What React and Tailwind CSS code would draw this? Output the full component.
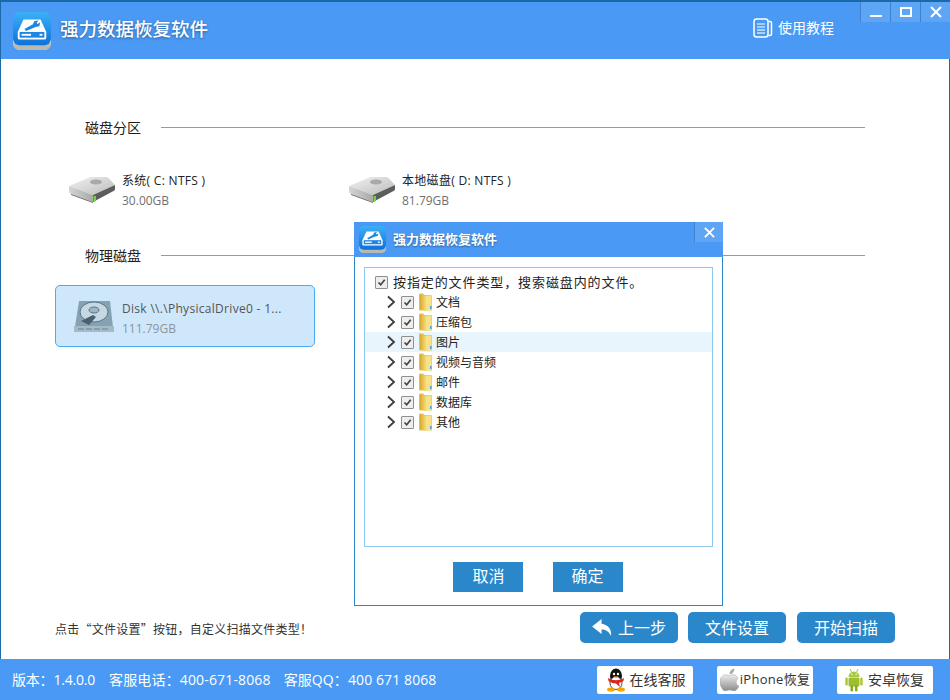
import { useState } from 'react';

const FONT = 'font-["Open_Sans","Noto_Sans_CJK_SC",sans-serif]';

const AppLogo = ({ className }) => (
  <svg viewBox="0 0 40 40" className={className}>
    <defs>
      <linearGradient id="logoBlue" x1="0" y1="0" x2="0" y2="1">
        <stop offset="0" stopColor="#3cb0f7" />
        <stop offset="1" stopColor="#0a73dc" />
      </linearGradient>
    </defs>
    <path d="M0 28h40v5a7 7 0 0 1-7 7H7a7 7 0 0 1-7-7z" fill="#d8d8d2" />
    <path d="M0 32h40v1a7 7 0 0 1-7 7H7a7 7 0 0 1-7-7z" fill="#b9b9b2" />
    <rect x="0" y="0" width="40" height="35" rx="7" fill="url(#logoBlue)" />
    <path d="M11 8h18l6 13v6a2 2 0 0 1-2 2H7a2 2 0 0 1-2-2v-6z" fill="#fff" />
    <rect x="7" y="21" width="26" height="6" fill="#1d86e2" />
    <rect x="9" y="23" width="10" height="2" fill="#fff" />
    <rect x="28" y="23" width="3" height="2" fill="#fff" />
    <path d="M12 18l9-5 1.500-3.500 4.500-.5-2.200 2.400 1.200 1.300 2.600-1.800-.8 4-4 .8-10 4.300z" fill="#1d86e2" />
  </svg>
);

const PartitionIcon = () => (
  <svg viewBox="0 0 47 27" className="w-[47px] h-[27px] -mt-[2px]">
    <defs>
      <linearGradient id="driveTop" x1="0" y1="0" x2="1" y2="1">
        <stop offset="0" stopColor="#f2f2f2" />
        <stop offset="1" stopColor="#b9bbb9" />
      </linearGradient>
      <linearGradient id="driveFront" x1="0" y1="0" x2="1" y2="0">
        <stop offset="0" stopColor="#d4d5d4" />
        <stop offset="1" stopColor="#a8aaa8" />
      </linearGradient>
    </defs>
    <path d="M0 10L19 2c1-.5 2-1 4-1h13c2 0 3 .5 4 1.500L46 9 24 19z" fill="url(#driveTop)" />
    <path d="M0 10l24 9v7L2 18c-1-.5-2-1.500-2-3z" fill="url(#driveFront)" />
    <path d="M24 19L46 9v4c0 1-.5 1.500-1.500 2L24 26z" fill="#5c5e5c" />
    <path d="M2 18l22 8v1L2 19z" fill="#6d6f6d" />
    <ellipse cx="27" cy="6" rx="6" ry="2.500" fill="#a8aaa8" />
    <rect x="24.500" y="20" width="2.500" height="5.500" fill="#6fd43a" />
  </svg>
);

const DiskIcon = () => (
  <svg viewBox="0 0 40 32" className="w-[40px] h-[32px]">
    <path d="M5 1h31l3 26H1z" fill="#84a2b2" />
    <ellipse cx="20" cy="12" rx="14" ry="10" fill="#c6d8e2" stroke="#5a7585" strokeWidth="1" />
    <ellipse cx="20" cy="10" rx="5" ry="3" fill="#9fb5c1" stroke="#5a7585" />
    <path d="M7 21l12-6 3 2-7 8z" fill="#48616f" />
    <rect x="0" y="26" width="40" height="6" fill="#a4bac6" />
    <path d="M4 29h32" stroke="#7d96a5" strokeWidth="1.500" strokeDasharray="6 2" />
  </svg>
);

const Folder = () => (
  <svg viewBox="0 0 13 18" className="w-[13px] h-[18px]">
    <defs>
      <linearGradient id="folderLeaf" x1="0" y1="0" x2="1" y2="0">
        <stop offset="0" stopColor="#d6a92e" />
        <stop offset="1" stopColor="#f5dc78" />
      </linearGradient>
    </defs>
    <path d="M0 1.500a1 1 0 0 1 1-1h3l1.500 1.500H12a1 1 0 0 1 1 1V17.500H1a1 1 0 0 1-1-1z" fill="#e3bf55" />
    <path d="M7 2.500h5.500V17.500H7z" fill="#f7e28a" />
    <path d="M1 1.500L7 3v15L1 16z" fill="url(#folderLeaf)" />
    <rect x="11" y="13" width="1.500" height="3" fill="#4f9fd4" />
  </svg>
);

const Check = () => (
  <span className="flex items-center justify-center w-[13px] h-[13px] border border-[#8e8f8f] bg-[#eeeeee] rounded-[1px]">
    <svg viewBox="0 0 11 11" className="w-[11px] h-[11px]">
      <path d="M2.500 5.500l2.200 2.300 4-5" fill="none" stroke="#444" strokeWidth="1.700" />
    </svg>
  </span>
);

const Chevron = () => (
  <svg viewBox="0 0 10 14" className="w-[10px] h-[14px]">
    <path d="M2 1.500L8 7l-6 5.500" fill="none" stroke="#3c3c3c" strokeWidth="1.800" />
  </svg>
);

const QQIcon = () => (
  <svg viewBox="0 0 20 24" className="w-[20px] h-[24px]">
    <ellipse cx="10" cy="8" rx="6" ry="7.500" fill="#111" />
    <ellipse cx="10" cy="15" rx="6" ry="6.500" fill="#fff" stroke="#222" strokeWidth="0.800" />
    <path d="M2 10c5 3 11 3 16 0l-.5 3c-2 1-3 1.500-4.500 1.700L14 19l-4-3.500c-3 0-5.500-1-7.500-2.500z" fill="#e2231a" />
    <ellipse cx="5" cy="21.500" rx="4" ry="2" fill="#f5a400" />
    <ellipse cx="15" cy="21.500" rx="4" ry="2" fill="#f5a400" />
    <circle cx="8" cy="6" r="1.200" fill="#fff" />
    <circle cx="12" cy="6" r="1.200" fill="#fff" />
    <path d="M7.500 8.500h5L10 10z" fill="#f5a400" />
  </svg>
);

const AppleIcon = () => (
  <svg viewBox="0 0 20 24" className="w-[19px] h-[23px]">
    <defs>
      <linearGradient id="appleGrey" x1="0" y1="0" x2="0" y2="1">
        <stop offset="0" stopColor="#ededed" />
        <stop offset="0.500" stopColor="#bdbdbd" />
        <stop offset="1" stopColor="#8c8c8c" />
      </linearGradient>
    </defs>
    <path d="M10 8c2-1.200 5-1.800 7 .3 1.500 1.500 1.500 2.200 2 2.700-3 2-2.500 6.500 1 8-1 2-3 5-5 5-1.500 0-3-1-5-1s-3 1-4.500 1C3 24 0 18.500 0 14.500 0 10 3 7 6 7c1.500 0 3 .800 4 1z" fill="url(#appleGrey)" stroke="#9a9a9a" strokeWidth="0.500" />
    <path d="M10 6.500c0-3 2.500-5.500 5-6 .2 3-2 6-5 6z" fill="#a8a8a8" />
  </svg>
);

const AndroidIcon = () => (
  <svg viewBox="0 0 18 24" className="w-[18px] h-[24px]">
    <path d="M5 1l1.500 3M13 1l-1.500 3" stroke="#8eb021" strokeWidth="0.800" />
    <path d="M3.500 9a5.500 5.500 0 0 1 11 0z" fill="#a9c93c" />
    <circle cx="6.800" cy="6.300" r="0.700" fill="#fff" />
    <circle cx="11.200" cy="6.300" r="0.700" fill="#fff" />
    <rect x="3.500" y="9.500" width="11" height="9" rx="1.500" fill="#9dbf2f" />
    <rect x="0.300" y="9.500" width="2.500" height="8" rx="1.200" fill="#a9c93c" />
    <rect x="15.200" y="9.500" width="2.500" height="8" rx="1.200" fill="#a9c93c" />
    <rect x="5.500" y="17" width="2.600" height="6.500" rx="1.200" fill="#8bab25" />
    <rect x="9.900" y="17" width="2.600" height="6.500" rx="1.200" fill="#8bab25" />
  </svg>
);

const SectionTitle = ({ children }) => (
  <div className="flex items-center pl-[30px] pr-[30px]">
    <span className="text-[14px] leading-5 pt-[2px] text-[#1d1d1d] w-[76px] shrink-0">{children}</span>
    <span className="flex-1 h-px bg-[#9a9a9a]" />
  </div>
);

const Partition = ({ name, size }) => (
  <div className="flex items-center w-[280px] pl-[14px]">
    <PartitionIcon />
    <div className="ml-[6px] pt-[1px]">
      <div className="text-[12px] leading-5 tracking-[0.3px] text-[#222]">{name}</div>
      <div className="text-[12px] leading-5 text-[#6f6f6f]">{size}</div>
    </div>
  </div>
);

const fileTypes = ['文档', '压缩包', '图片', '视频与音频', '邮件', '数据库', '其他'];

function FileTypeDialog() {
  const [hovered, setHovered] = useState(2);

  return (
    <div className="absolute left-[354px] top-[222px] w-[369px] h-[384px] flex flex-col bg-white border border-[#2a86c8]">
      <div className="h-[35px] shrink-0 flex items-center bg-[#4a9af5] -mx-px -mt-px relative">
        <AppLogo className="w-[27px] h-[27px] ml-[5px]" />
        <span className="ml-[7px] pt-[1px] text-[13px] font-bold text-white [text-shadow:0_1px_2px_rgba(0,0,0,0.4)]">强力数据恢复软件</span>
        <button className="absolute right-0 top-0 w-[29px] h-[20px] bg-[#5ea5f6] border-l border-[#3d82d0] flex items-center justify-center">
          <svg viewBox="0 0 12 12" className="w-[11px] h-[11px]">
            <path d="M1 1l10 10M11 1L1 11" stroke="#fff" strokeWidth="2" />
          </svg>
        </button>
      </div>
      <div className="mt-[10px] mx-[9px] h-[280px] border border-[#8ccaf2] pt-[5px]">
        <div className="flex items-center h-[19px] pl-[10px]">
          <Check />
          <span className="ml-[5px] text-[13px] tracking-[0.9px] text-[#222]">按指定的文件类型，搜索磁盘内的文件。</span>
        </div>
        {fileTypes.map((t, i) => (
          <div
            key={t}
            onMouseEnter={() => setHovered(i)}
            className={`flex items-center h-[20px] pl-[21px] ${hovered === i ? 'bg-[#e8f5fd]' : ''}`}
          >
            <Chevron />
            <span className="ml-[5px]"><Check /></span>
            <span className="ml-[5px]"><Folder /></span>
            <span className="ml-[4px] pt-[2px] text-[12px] text-[#222]">{t}</span>
          </div>
        ))}
      </div>
      <div className="flex justify-center gap-[30px] mt-[15px] pr-[2px]">
        <button className="w-[70px] h-[30px] pb-[2px] pl-[2px] bg-[#2a87ca] text-white text-[16px] leading-none">取消</button>
        <button className="w-[70px] h-[30px] pb-[2px] bg-[#2a87ca] text-white text-[16px] leading-none">确定</button>
      </div>
    </div>
  );
}

export default function App() {
  return (
    <div className={`relative w-[950px] h-[700px] flex flex-col overflow-hidden bg-white ${FONT}`}>
      {/* Header */}
      <header className="relative h-[59px] shrink-0 flex items-center bg-[#4a9af5] border-t-2 border-l border-[#1a6aa8] pb-[3px]">
        <AppLogo className="w-[38px] h-[38px] ml-[12px] mt-[3px]" />
        <span className="ml-[9px] text-[18.500px] leading-none font-medium text-white [text-shadow:0_1px_3px_rgba(0,0,0,0.4)]">强力数据恢复软件</span>
        <div className="ml-auto mr-[116px] mb-[2px] flex items-center gap-[5px] text-white text-[14px] leading-none">
          <svg viewBox="0 0 20 20" className="w-[20px] h-[20px]">
            <rect x="1" y="1" width="14" height="18" rx="2.500" fill="none" stroke="#fff" strokeWidth="1.500" />
            <path d="M15.500 3.500h1.500a1.500 1.500 0 0 1 1.500 1.500v11a1.500 1.500 0 0 1-1.500 1.500h-1.500" fill="none" stroke="#fff" strokeWidth="1.500" />
            <path d="M4 6h8M4 9h8" stroke="#fff" strokeWidth="1.200" />
            <path d="M4 12h8M4 15h8" stroke="#cfe3fb" strokeWidth="1.500" />
          </svg>
          <span>使用教程</span>
        </div>
        <div className="absolute right-0 top-0 h-[20px] flex">
          <button className="w-[30px] bg-[#5ea5f6] border-l border-[#3d82d0] flex items-end justify-center pb-[5px]">
            <span className="block w-[12px] h-[2px] bg-white" />
          </button>
          <button className="w-[30px] bg-[#5ea5f6] border-l border-[#3d82d0] flex items-center justify-center">
            <span className="block w-[12px] h-[10px] border-2 border-white" />
          </button>
          <button className="w-[30px] bg-[#5ea5f6] border-l border-[#3d82d0] flex items-center justify-center">
            <svg viewBox="0 0 12 12" className="w-[12px] h-[12px]">
              <path d="M1 1l10 10M11 1L1 11" stroke="#fff" strokeWidth="2" />
            </svg>
          </button>
        </div>
      </header>

      {/* Main */}
      <main className="flex-1 flex flex-col border-l border-[#1a6aa8] border-r pl-[54px] pr-[54px]">
        <div className="mt-[57px]"><SectionTitle>磁盘分区</SectionTitle></div>
        <div className="flex mt-[32px]">
          <Partition name="系统( C: NTFS )" size="30.00GB" />
          <Partition name="本地磁盘( D: NTFS )" size="81.79GB" />
        </div>
        <div className="mt-[33px]"><SectionTitle>物理磁盘</SectionTitle></div>
        <div className="mt-[19px] w-[260px] h-[62px] flex items-center rounded-[5px] bg-[#cfe7fb] border border-[#45aef2] pl-[18px]">
          <DiskIcon />
          <div className="ml-[8px] pt-[6px]">
            <div className="text-[12px] leading-5 tracking-[0.3px] text-[#555]">Disk \\.\PhysicalDrive0 - 1...</div>
            <div className="text-[12px] leading-5 text-[#8c959c]">111.79GB</div>
          </div>
        </div>

        <div className="mt-auto mb-[16px] flex items-center">
          <span className={`pt-[2px] text-[12px] tracking-[0.25px] text-[#333] font-["Noto_Sans_CJK_SC",sans-serif]`}>点击“文件设置”按钮，自定义扫描文件类型！</span>
          <div className="ml-auto flex gap-[11px]">
            <button className="w-[98px] h-[31px] mr-[-1px] rounded-[5px] bg-[#2a87ca] text-white text-[16px] leading-none flex items-center justify-center gap-[5px]">
              <svg viewBox="0 0 22 18" className="w-[21px] h-[17px]">
                <path d="M10 0L0 8l10 8v-5c4 0 8 2 10 7 1-7-3-12-10-13z" fill="#fff" />
              </svg>
              上一步
            </button>
            <button className="w-[98px] h-[31px] rounded-[5px] bg-[#2a87ca] text-white text-[16px] leading-none">文件设置</button>
            <button className="w-[98px] h-[31px] rounded-[5px] bg-[#2a87ca] text-white text-[16px] leading-none">开始扫描</button>
          </div>
        </div>
      </main>

      {/* Footer */}
      <footer className="h-[41px] shrink-0 flex items-center bg-[#4a9af5] pl-[12px] pr-[17px] text-white text-[14px]">
        <span className="tracking-[-0.2px]">版本：1.4.0.0</span>
        <span className="ml-[14px] tracking-[0.15px]">客服电话：400-671-8068</span>
        <span className="ml-[13px] tracking-[0.1px]">客服QQ：400 671 8068</span>
        <div className="ml-auto flex gap-[24px]">
          <button className="w-[96px] h-[28px] bg-white rounded-[2px] flex items-center justify-center gap-[4px] pl-[1px] text-[14px] text-[#333]"><QQIcon />在线客服</button>
          <button className="w-[96px] h-[28px] bg-white rounded-[2px] flex items-center justify-center gap-[1px] text-[13px] tracking-[0.3px] text-[#333]"><AppleIcon />iPhone恢复</button>
          <button className="w-[96px] h-[28px] bg-white rounded-[2px] flex items-center justify-center gap-[5px] pr-[1px] text-[14px] text-[#333]"><AndroidIcon />安卓恢复</button>
        </div>
      </footer>

      <FileTypeDialog />
    </div>
  );
}
